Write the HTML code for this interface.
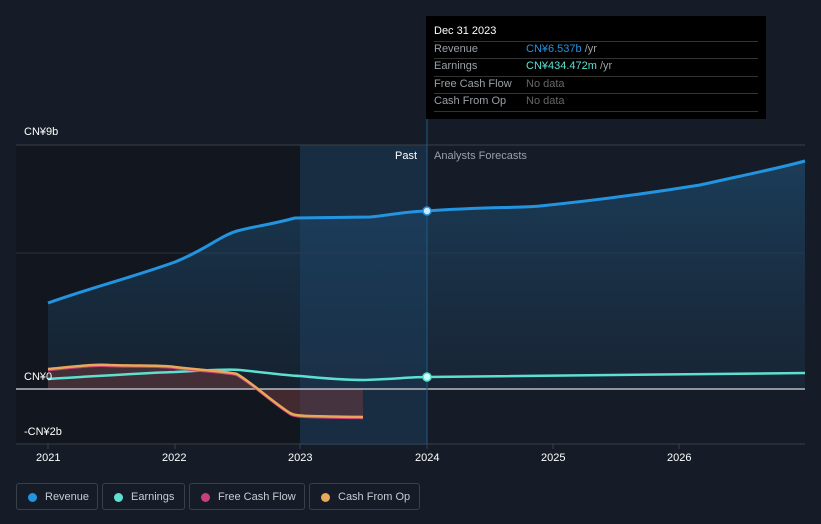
<!DOCTYPE html>
<html><head><style>
body{margin:0;width:821px;height:524px;background:#161c27;font-family:"Liberation Sans",sans-serif;overflow:hidden;position:relative}
.t{position:absolute;font-size:11px;color:#fff}
.tip{position:absolute;left:426px;top:16px;width:340px;height:103px;background:#000}
.tip div{position:absolute;left:8px;font-size:11px;color:#9aa0a8}
.line{position:absolute;left:8px;width:324px;height:1px;background:#333}
.leg{position:absolute;top:483px;height:27px;border:1px solid #3a404a;border-radius:3px;font-size:11px;color:#c8ccd2;line-height:26px;box-sizing:border-box}
.leg i{position:absolute;left:11px;top:9px;width:9px;height:9px;border-radius:50%}
.leg span{position:absolute;left:28px}
</style></head><body>
<svg width="821" height="524" style="position:absolute;left:0;top:0">
<defs><linearGradient id="rg" x1="0" y1="0" x2="0" y2="1"><stop offset="0" stop-color="#1d4a6e" stop-opacity=".7"/><stop offset="1" stop-color="#1d3a55" stop-opacity=".3"/></linearGradient></defs>
<rect x="16" y="145" width="284" height="300" fill="#12171f"/>
<rect x="300" y="145" width="127" height="300" fill="#182c42"/>
<line x1="16" y1="145" x2="805" y2="145" stroke="#3a404a"/>
<line x1="16" y1="253" x2="805" y2="253" stroke="#2a303a"/>
<line x1="16" y1="444" x2="805" y2="444" stroke="#3a404a"/>
<path d="M48,303 C90,288 130,278 175,262 C205,250 220,236 237,231 C255,226 265,226 295,218 L370,217 C390,215 410,211 427,211 C480,207 520,208 540,206 C600,200 650,193 700,185 C740,176 780,168 805,161 L805,389 L48,389Z" fill="url(#rg)"/>
<path d="M48,369 C80,366 95,364 110,365 C140,366 160,365 175,367 C210,371 230,372 237,374 C255,385 270,400 290,413 C295,416 300,416 363,417 L363,389 L48,389Z" fill="#6b3b3e" fill-opacity=".55"/>
<line x1="16" y1="389" x2="805" y2="389" stroke="#b8bcc2" stroke-width="1.5"/>
<line x1="427" y1="119" x2="427" y2="444" stroke="#1f5a85"/>
<path d="M48,303 C90,288 130,278 175,262 C205,250 220,236 237,231 C255,226 265,226 295,218 L370,217 C390,215 410,211 427,211 C480,207 520,208 540,206 C600,200 650,193 700,185 C740,176 780,168 805,161" fill="none" stroke="#2394e0" stroke-width="3"/>
<path d="M48,379 C100,376 140,373 175,372 C210,370 230,369 240,370 C270,373 290,376 300,376 C330,379 350,380 365,380 C395,379 410,377 427,377 L805,373" fill="none" stroke="#5ee0d0" stroke-width="2.5"/>
<path d="M48,369 C80,366 95,364 110,365 C140,366 160,365 175,367 C210,371 230,372 237,374 C255,385 270,400 290,413 C295,416 300,416 363,417" fill="none" stroke="#c8407a" stroke-width="2.5" transform="translate(0,1)"/>
<path d="M48,369 C80,366 95,364 110,365 C140,366 160,365 175,367 C210,371 230,372 237,374 C255,385 270,400 290,413 C295,416 300,416 363,417" fill="none" stroke="#e8a85a" stroke-width="2.5"/>
<circle cx="427" cy="211" r="4" fill="#cfeaff" stroke="#2394e0" stroke-width="1.5"/>
<circle cx="427" cy="377" r="4" fill="#c8fff6" stroke="#5ee0d0" stroke-width="1.5"/>
<g stroke="#3a404a"><line x1="48" y1="444" x2="48" y2="449"/><line x1="175" y1="444" x2="175" y2="449"/><line x1="300" y1="444" x2="300" y2="449"/><line x1="427" y1="444" x2="427" y2="449"/><line x1="553" y1="444" x2="553" y2="449"/><line x1="679" y1="444" x2="679" y2="449"/></g>
</svg>
<div class="t" style="left:24px;top:126px">CN¥9b</div>
<div class="t" style="left:24px;top:371px">CN¥0</div>
<div class="t" style="left:24px;top:426px">-CN¥2b</div>
<div class="t" style="left:395px;top:150px;color:#fff">Past</div>
<div class="t" style="left:434px;top:150px;color:#9aa0a8">Analysts Forecasts</div>
<div class="t" style="left:36px;top:452px">2021</div>
<div class="t" style="left:162px;top:452px">2022</div>
<div class="t" style="left:288px;top:452px">2023</div>
<div class="t" style="left:415px;top:452px">2024</div>
<div class="t" style="left:541px;top:452px">2025</div>
<div class="t" style="left:667px;top:452px">2026</div>
<div class="tip">
<div style="top:9px;color:#fff">Dec 31 2023</div>
<div class="line" style="top:25px"></div>
<div style="top:27px">Revenue</div><div style="top:27px;left:100px"><span style="color:#2394e0">CN¥6.537b</span> /yr</div>
<div class="line" style="top:42px"></div>
<div style="top:44px">Earnings</div><div style="top:44px;left:100px"><span style="color:#5ee0d0">CN¥434.472m</span> /yr</div>
<div class="line" style="top:60px"></div>
<div style="top:62px">Free Cash Flow</div><div style="top:62px;left:100px;color:#666">No data</div>
<div class="line" style="top:77px"></div>
<div style="top:79px">Cash From Op</div><div style="top:79px;left:100px;color:#666">No data</div>
<div class="line" style="top:95px"></div>
</div>
<div class="leg" style="left:16px;width:82px"><i style="background:#2394e0"></i><span>Revenue</span></div>
<div class="leg" style="left:102px;width:83px"><i style="background:#5ee0d0"></i><span>Earnings</span></div>
<div class="leg" style="left:189px;width:116px"><i style="background:#c8407a"></i><span>Free Cash Flow</span></div>
<div class="leg" style="left:309px;width:111px"><i style="background:#e8a85a"></i><span>Cash From Op</span></div>
</body></html>
